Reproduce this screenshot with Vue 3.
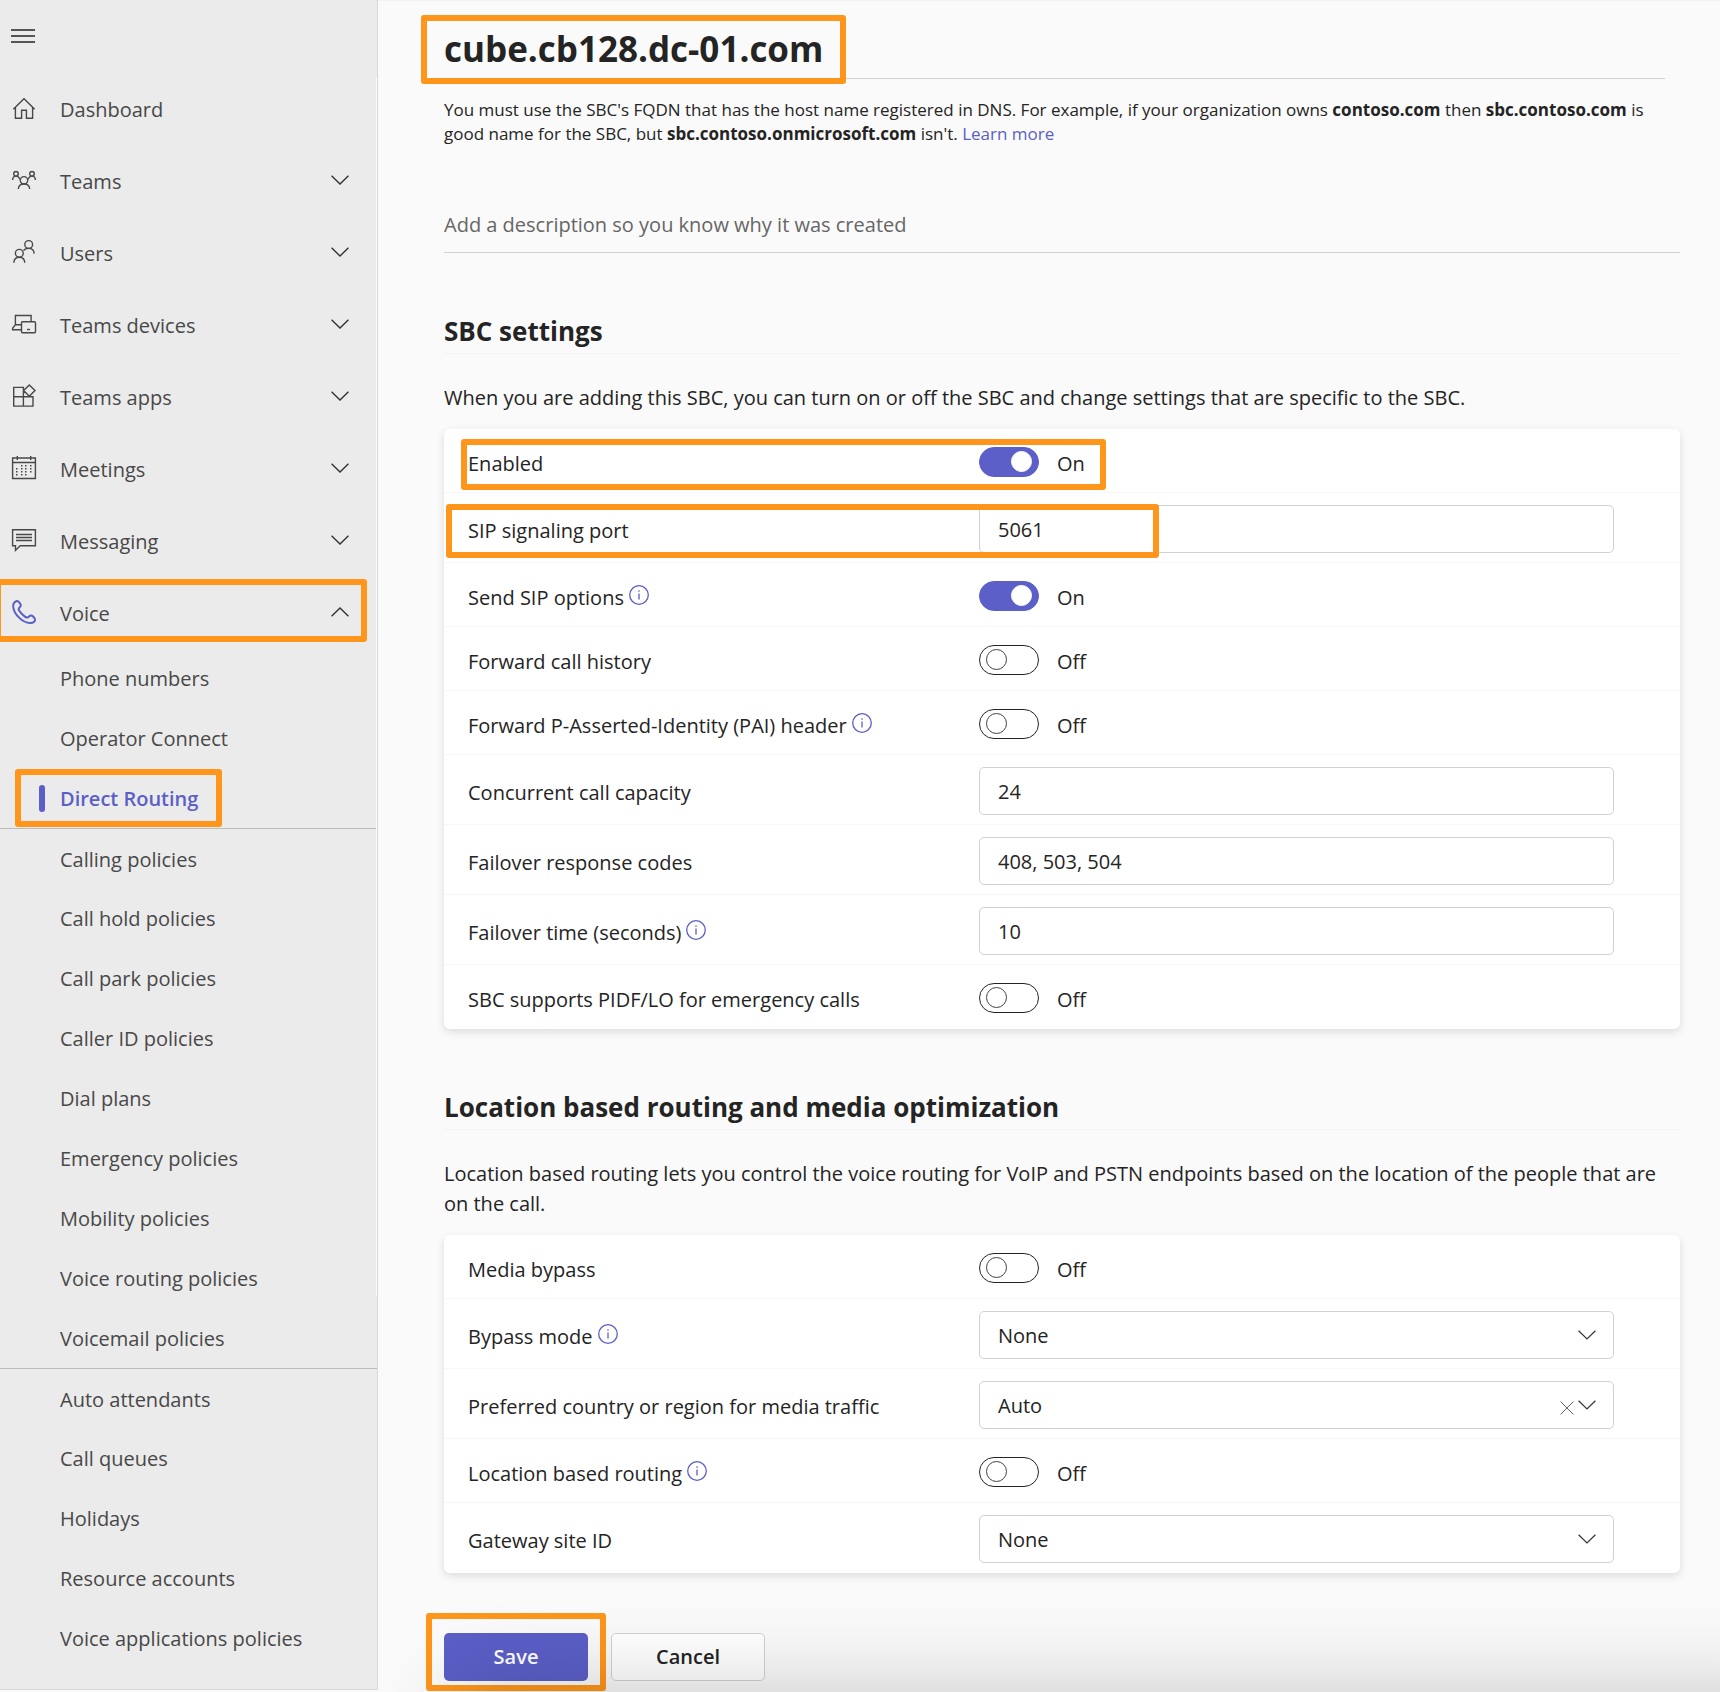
<script setup>
import { ref } from 'vue'

const navItems = [
  { label: 'Dashboard', icon: 'home', expandable: false },
  { label: 'Teams', icon: 'teams', expandable: true },
  { label: 'Users', icon: 'users', expandable: true },
  { label: 'Teams devices', icon: 'devices', expandable: true },
  { label: 'Teams apps', icon: 'apps', expandable: true },
  { label: 'Meetings', icon: 'calendar', expandable: true },
  { label: 'Messaging', icon: 'message', expandable: true },
  { label: 'Voice', icon: 'phone', expandable: true, open: true },
]

const voiceGroups = [
  ['Phone numbers', 'Operator Connect', 'Direct Routing'],
  [
    'Calling policies', 'Call hold policies', 'Call park policies', 'Caller ID policies', 'Dial plans',
    'Emergency policies', 'Mobility policies', 'Voice routing policies', 'Voicemail policies',
  ],
  ['Auto attendants', 'Call queues', 'Holidays', 'Resource accounts', 'Voice applications policies'],
]
const currentPage = 'Direct Routing'

const calendarDots = [
  [10, 10], [14, 10], [19, 10],
  [5, 13], [10, 13], [14, 13], [19, 13],
  [5, 16], [10, 16], [14, 16], [19, 16],
  [5, 19], [10, 19], [14, 19],
]

const description = ref('')

const sections = ref([
  {
    title: 'SBC settings',
    text: 'When you are adding this SBC, you can turn on or off the SBC and change settings that are specific to the SBC.',
    rows: [
      { id: 'enabled', label: 'Enabled', type: 'toggle', value: true, mark: 'mark-enabled' },
      { id: 'port', label: 'SIP signaling port', type: 'text', value: '5061', mark: 'mark-port' },
      { id: 'options', label: 'Send SIP options', type: 'toggle', value: true, info: true },
      { id: 'history', label: 'Forward call history', type: 'toggle', value: false },
      { id: 'pai', label: 'Forward P-Asserted-Identity (PAI) header', type: 'toggle', value: false, info: true },
      { id: 'capacity', label: 'Concurrent call capacity', type: 'text', value: '24' },
      { id: 'codes', label: 'Failover response codes', type: 'text', value: '408, 503, 504' },
      { id: 'failover', label: 'Failover time (seconds)', type: 'text', value: '10', info: true },
      { id: 'pidf', label: 'SBC supports PIDF/LO for emergency calls', type: 'toggle', value: false },
    ],
  },
  {
    title: 'Location based routing and media optimization',
    text: 'Location based routing lets you control the voice routing for VoIP and PSTN endpoints based on the location of the people that are on the call.',
    rows: [
      { id: 'bypass', label: 'Media bypass', type: 'toggle', value: false },
      { id: 'mode', label: 'Bypass mode', type: 'select', value: 'None', info: true },
      { id: 'country', label: 'Preferred country or region for media traffic', type: 'select', value: 'Auto', clearable: true },
      { id: 'lbr', label: 'Location based routing', type: 'toggle', value: false, info: true },
      { id: 'site', label: 'Gateway site ID', type: 'select', value: 'None' },
    ],
  },
])
</script>

<template>
  <div class="page">
    <nav class="sidebar" aria-label="Admin center">
      <button class="menu" type="button" aria-label="Toggle navigation">
        <svg width="24" height="14" viewBox="0 0 24 14"><path d="M0 1h24M0 7h24M0 13h24" /></svg>
      </button>

      <button v-for="item in navItems" :key="item.label" type="button" class="nav-item" :class="{ open: item.open }">
        <svg class="nav-icon" width="24" height="24" viewBox="0 0 24 24">
          <path v-if="item.icon === 'home'" d="M1.3 13.2 12 2.7l10.7 10.5M3.4 11.4v10.9h6.2v-8h4.8v8h6.2V11.4" />
          <g v-else-if="item.icon === 'teams'">
            <circle cx="4" cy="5.8" r="2.3" /><circle cx="20" cy="5.8" r="2.3" /><circle cx="12" cy="12.3" r="3.7" />
            <path d="M.6 12c.1-2.4 1.5-3.9 3.4-3.9 1.8 0 3.3 1.2 3.6 3.3M23.4 12c-.1-2.4-1.5-3.9-3.4-3.9-1.8 0-3.3 1.2-3.6 3.3M6.3 21c.2-3.2 2.5-5 5.7-5s5.5 1.8 5.7 5" />
          </g>
          <g v-else-if="item.icon === 'users'">
            <circle cx="16.7" cy="4.5" r="3.9" /><circle cx="7.3" cy="13.3" r="3.9" />
            <path d="M11.5 10.5c1-1.4 2.9-2.1 5.2-2.1 3.2 0 5.3 2.1 5.5 5.2M1.8 22.7c.2-3.3 2.4-5.5 5.5-5.5s5.3 2.2 5.5 5.5" />
          </g>
          <g v-else-if="item.icon === 'devices'">
            <path d="M9.5 17.7H.6v-1.5l2.8-3.4V3.5h15.7v6M3.4 12.8h6" />
            <rect x="9.5" y="9.7" width="14" height="11" rx="1" /><path d="M15 17.5h3" />
          </g>
          <path v-else-if="item.icon === 'apps'" d="M1.7 3.4h9.7v9.4H1.7zM1.7 12.8h9.7v9.3H1.7zM11.4 12.8H21v9.3h-9.6zM17.3 1l5.7 5.6-5.7 5.7-5.7-5.7z" />
          <g v-else-if="item.icon === 'calendar'">
            <path d="M.6 2h22.8v20.5H.6zM.6 6.5h22.8M5.3 0v4M18.7 0v4" />
            <rect v-for="(dot, i) in calendarDots" :key="i" class="dot" :x="dot[0] - 1" :y="dot[1] - 1" width="1.5" height="1.5" />
          </g>
          <path v-else-if="item.icon === 'message'" d="M.6 1.8h22.8v16H8.2l-4.7 4.6v-4.6H.6zM4 6.5h16M4 9.5h16M4 12.5h16" />
          <path v-else class="phone" d="M4.2 1.2C2 2 1 4 1.2 6.8 1.9 14.5 10.5 22.6 18 23c2.8.1 4.6-1.2 5-3 .3-1.6-2.2-4.2-3.8-4.4-1.9-.2-2.2 1.9-4 2C13 17.3 7 11.5 6.6 9.3c0-1.8 2.4-2.3 2.2-4.2C8.6 3.3 6 .6 4.2 1.2z" />
        </svg>
        <span class="nav-label">{{ item.label }}</span>
        <svg v-if="item.expandable" class="chevron" width="18" height="10" viewBox="0 0 18 10">
          <path :d="item.open ? 'M.6 9.3 9 1l8.4 8.3' : 'M.6.7 9 9 17.4.7'" />
        </svg>
      </button>

      <ul v-for="(group, g) in voiceGroups" :key="g" class="subnav">
        <li v-for="name in group" :key="name">
          <a href="#" :class="{ current: name === currentPage }">{{ name }}</a>
        </li>
      </ul>
    </nav>

    <main class="content">
      <header class="title-bar">
        <h1>cube.cb128.dc-01.com</h1>
      </header>
      <p class="hint">
        You must use the SBC's FQDN that has the host name registered in DNS. For example, if your organization owns
        <b>contoso.com</b> then <b>sbc.contoso.com</b> is good name for the SBC, but
        <b>sbc.contoso.onmicrosoft.com</b> isn't. <a href="#">Learn more</a>
      </p>
      <input
        v-model="description"
        class="description"
        type="text"
        aria-label="Description"
        placeholder="Add a description so you know why it was created"
      />

      <section v-for="section in sections" :key="section.title" class="section">
        <h2>{{ section.title }}</h2>
        <p class="intro">{{ section.text }}</p>
        <div class="card">
          <div v-for="row in section.rows" :key="row.id" class="row" :class="row.mark">
            <div class="row-label">
              <label :for="row.id">{{ row.label }}</label>
              <button v-if="row.info" type="button" class="info" :aria-label="'About ' + row.label">
                <svg width="20" height="20" viewBox="0 0 20 20">
                  <circle cx="10" cy="10" r="9.3" /><path d="M10 8.5v6M10 5.2v1.6" />
                </svg>
              </button>
            </div>
            <div v-if="row.type === 'toggle'" class="toggle">
              <input :id="row.id" v-model="row.value" type="checkbox" role="switch" />
              <span>{{ row.value ? 'On' : 'Off' }}</span>
            </div>
            <input v-else-if="row.type === 'text'" :id="row.id" v-model="row.value" class="field" type="text" />
            <div v-else class="select">
              <select :id="row.id" v-model="row.value" class="field">
                <option>{{ row.value }}</option>
              </select>
              <div class="select-icons">
                <button v-if="row.clearable" type="button" class="clear" aria-label="Clear">
                  <svg width="14" height="14" viewBox="0 0 14 14"><path d="M.6.6l12.8 12.8M13.4.6.6 13.4" /></svg>
                </button>
                <svg class="chevron" width="18" height="10" viewBox="0 0 18 10"><path d="M.6.7 9 9 17.4.7" /></svg>
              </div>
            </div>
          </div>
        </div>
      </section>

      <div class="actions">
        <div class="save-wrap"><button type="button" class="btn save">Save</button></div>
        <button type="button" class="btn cancel">Cancel</button>
      </div>
    </main>
    <div class="bottom-shade"></div>
  </div>
</template>

<style>
body {
  margin: 0;
  background: #fafafa;
}
</style>

<style scoped>
*,
*::before,
*::after {
  box-sizing: border-box;
}

.page {
  --orange: #ff961b;
  --purple: #5b5fc7;
  position: relative;
  display: flex;
  align-items: flex-start;
  min-height: 100vh;
  overflow: hidden;
  background: #fafafa;
  color: #242424;
  font-family: "Open Sans", "Noto Sans", sans-serif;
  font-size: 20px;
  line-height: 30px;
}

button,
input,
select {
  font: inherit;
  color: inherit;
}

button {
  padding: 0;
  border: 0;
  background: none;
}

svg {
  display: block;
  flex: none;
  fill: none;
  stroke: currentColor;
}

a {
  color: var(--purple);
  text-decoration: none;
}

/* Sidebar */
.sidebar {
  position: relative;
  flex: none;
  width: 378px;
  padding-bottom: 21px;
  border-right: 1px solid #d9d9d9;
  border-bottom: 1px solid #d9d9d9;
  background: #ebebeb;
  color: #484848;
}

.sidebar::after {
  content: "";
  position: absolute;
  top: 78px;
  right: 0;
  width: 1px;
  height: 1218px;
  background: #fafafa;
}

.menu {
  display: flex;
  align-items: center;
  height: 72px;
  padding-left: 11px;
  color: #242424;
  stroke-width: 1.5;
}

.nav-item {
  position: relative;
  display: flex;
  align-items: center;
  gap: 24px;
  width: 100%;
  height: 72px;
  padding: 0 28px 0 12px;
  text-align: left;
}

.nav-label {
  flex: 1;
  padding-top: 4px;
}

.nav-icon {
  overflow: visible;
  stroke-width: 1.4;
}

.dot {
  fill: currentColor;
  stroke: none;
}

.phone {
  stroke: var(--purple);
  stroke-width: 2;
}

.chevron {
  stroke-width: 1.4;
  color: #333;
}

.nav-item.open::after {
  content: "";
  position: absolute;
  top: 3px;
  right: 10px;
  bottom: 6px;
  left: -5px;
  border: 6px solid var(--orange);
  border-radius: 3px;
}

.subnav {
  margin: 0;
  padding: 0;
  list-style: none;
}

.subnav li {
  position: relative;
  display: flex;
  align-items: center;
  height: 60px;
  padding: 2px 0 0 60px;
}

.subnav + .subnav li:first-child {
  border-top: 1px solid #bdbdbd;
}

.subnav a {
  color: inherit;
}

.subnav .current {
  color: var(--purple);
  font-weight: 600;
}

.current::before {
  content: "";
  position: absolute;
  top: 17px;
  left: 39px;
  width: 6px;
  height: 27px;
  border-radius: 3px;
  background: var(--purple);
}

.current::after {
  content: "";
  position: absolute;
  top: 1px;
  left: 15px;
  width: 207px;
  height: 58px;
  border: 6px solid var(--orange);
  border-radius: 3px;
}

/* Main column */
.content {
  flex: 1;
  min-width: 0;
  padding: 0 40px 0 66px;
  border-top: 1px solid #f3f3f3;
}

.title-bar {
  height: 78px;
  margin-right: 15px;
  padding-top: 24px;
  border-bottom: 1px solid #d1d1d1;
}

h1 {
  position: relative;
  width: max-content;
  margin: 0;
  font-size: 35px;
  font-weight: 700;
  line-height: 48px;
}

h1::after {
  content: "";
  position: absolute;
  top: -10px;
  right: -23px;
  bottom: -11px;
  left: -23px;
  border: 6px solid var(--orange);
  border-radius: 3px;
}

.hint {
  margin: 19px 0 53px;
  font-size: 17px;
  line-height: 24px;
}

.description {
  display: block;
  width: 100%;
  height: 54px;
  padding: 0 0 2px;
  border: 0;
  border-bottom: 1px solid #d1d1d1;
  background: transparent;
}

.description::placeholder {
  color: #666;
  opacity: 1;
}

.section {
  padding-top: 59px;
}

h2 {
  margin: 0;
  padding-bottom: 3px;
  border-bottom: 1px solid #f3f3f3;
  font-size: 26px;
  font-weight: 700;
  line-height: 38px;
}

.intro {
  margin: 29px 0 16px;
}

.card {
  border-radius: 6px;
  background: #fff;
  box-shadow: 0 3px 8px rgba(0, 0, 0, 0.12);
}

.row {
  position: relative;
  display: grid;
  grid-template-columns: minmax(0, 511fr) minmax(0, 635fr);
  align-items: center;
  padding: 12px 66px 9px 24px;
  border-bottom: 1px solid #f7f7f7;
}

.row:last-child {
  border-bottom-color: transparent;
}

.row-label {
  display: flex;
  align-items: center;
  gap: 5px;
  padding-top: 3px;
}

.info {
  padding-bottom: 6px;
  color: var(--purple);
  stroke-width: 1.3;
}

.toggle {
  display: flex;
  align-items: center;
  gap: 18px;
  height: 42px;
}

.toggle input {
  width: 60px;
  height: 30px;
  margin: 0;
  padding: 3px 6px;
  border: 1px solid #242424;
  border-radius: 15px;
  appearance: none;
}

.toggle input::before {
  content: "";
  display: block;
  width: 21px;
  height: 21px;
  border: 1px solid #424242;
  border-radius: 50%;
}

.toggle input:checked {
  border-color: var(--purple);
  background: var(--purple);
}

.toggle input:checked::before {
  margin-left: auto;
  border-color: #fff;
  background: #fff;
}

.toggle span {
  padding-top: 3px;
}

.field {
  display: block;
  width: 100%;
  height: 48px;
  padding: 1px 18px 0;
  border: 1px solid #d1d1d1;
  border-radius: 5px;
  background: #fff;
  appearance: none;
}

.select {
  position: relative;
}

.select-icons {
  position: absolute;
  top: 0;
  right: 18px;
  display: flex;
  align-items: center;
  gap: 4px;
  height: 48px;
  pointer-events: none;
}

.select .chevron {
  stroke-width: 1.2;
}

.clear {
  padding-top: 5px;
  color: #616161;
}

.mark-enabled::after,
.mark-port::after {
  content: "";
  position: absolute;
  border: 6px solid var(--orange);
  border-radius: 3px;
  pointer-events: none;
}

.mark-enabled::after {
  top: 10px;
  left: 17px;
  width: 645px;
  height: 51px;
}

.mark-port::after {
  top: 11px;
  left: 2px;
  width: 713px;
  height: 54px;
}

.actions {
  display: flex;
  gap: 23px;
  padding: 60px 0 10px;
}

.btn {
  height: 48px;
  border-radius: 5px;
  font-weight: 600;
}

.save {
  width: 144px;
  background: var(--purple);
  color: #fff;
}

.cancel {
  width: 154px;
  border: 1px solid #d1d1d1;
  background: #fff;
}

.save-wrap {
  position: relative;
  display: flex;
}

.save-wrap::after {
  content: "";
  position: absolute;
  inset: -20px -18px -10px;
  border: 6px solid var(--orange);
  border-radius: 3px;
  pointer-events: none;
}

.bottom-shade {
  position: absolute;
  top: 100%;
  right: -100px;
  left: 460px;
  height: 200px;
  box-shadow: 0 0 90px rgba(0, 0, 0, 0.21);
  pointer-events: none;
}
</style>
